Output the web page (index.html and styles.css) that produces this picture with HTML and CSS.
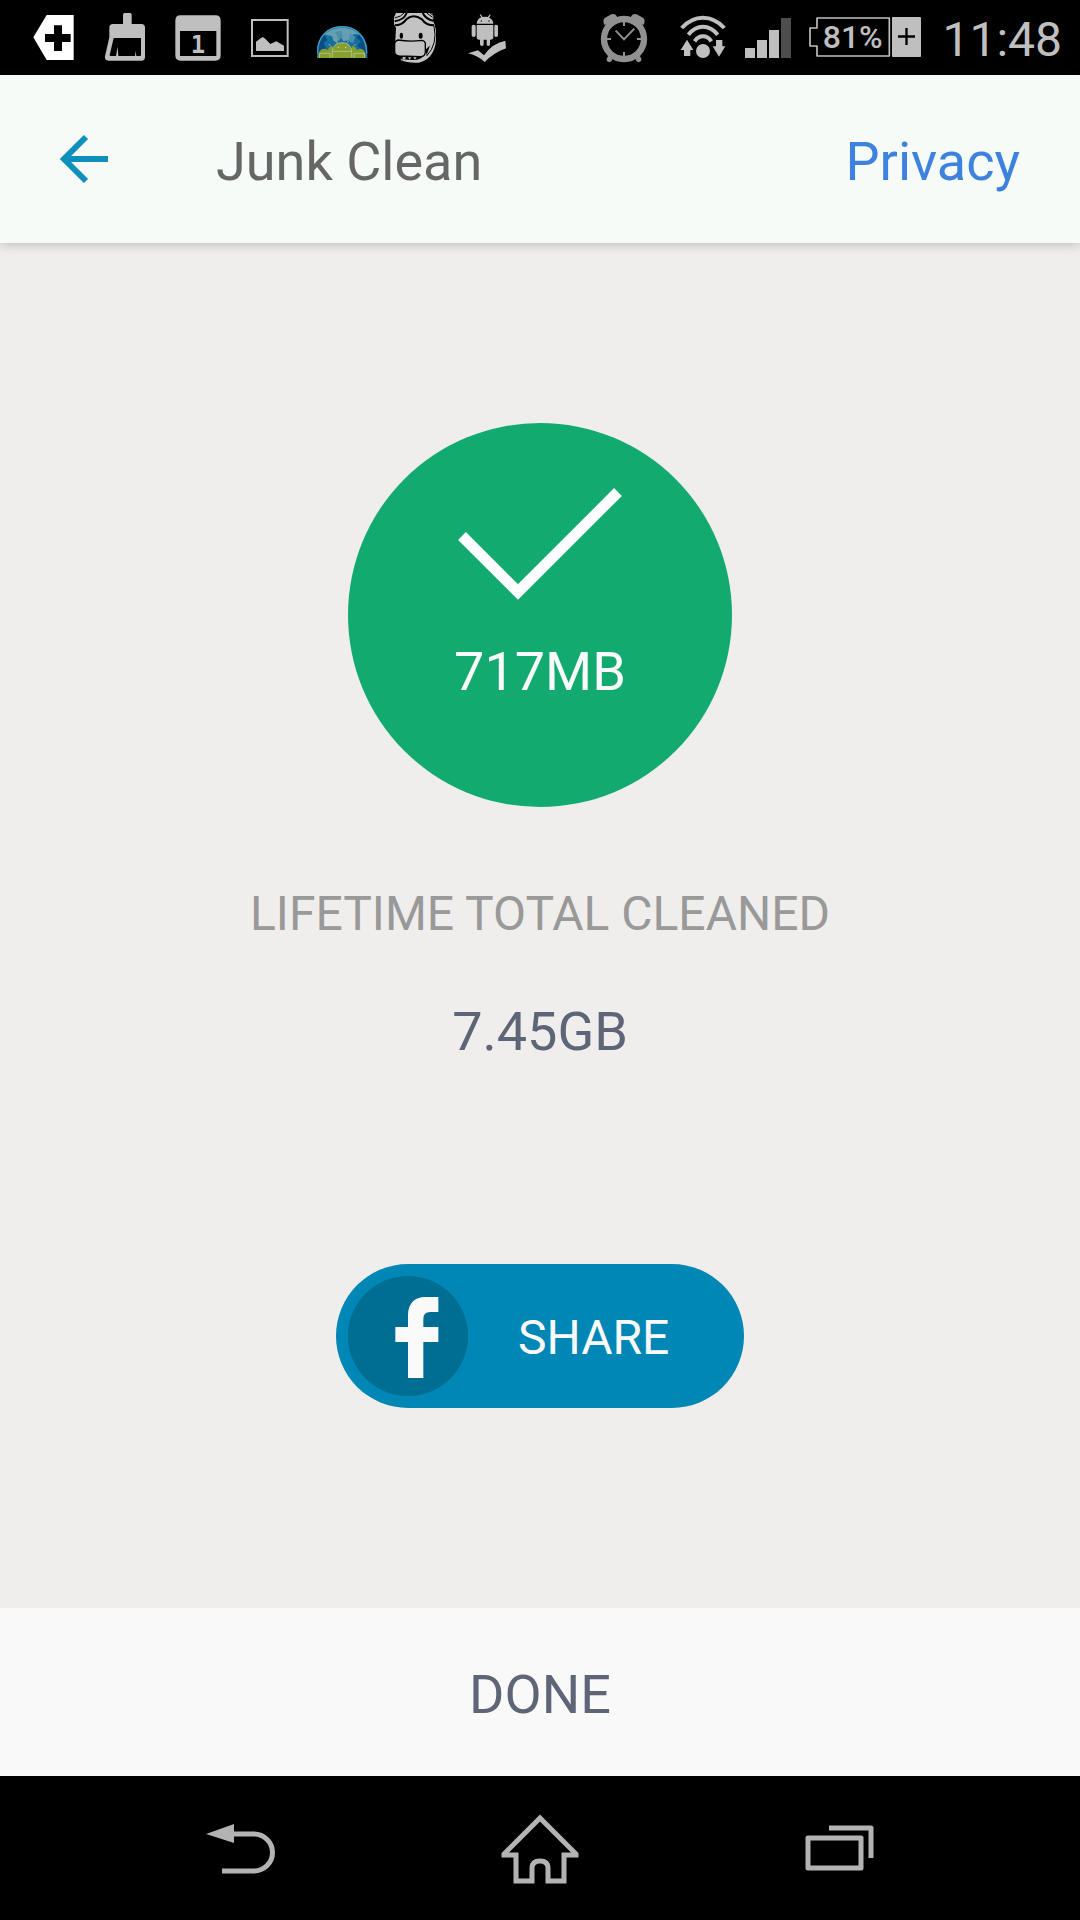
FILE: index.html
```html
<!DOCTYPE html>
<html lang="en">
<head>
<meta charset="utf-8">
<meta name="viewport" content="width=device-width, initial-scale=1">
<title>Junk Clean</title>
<link rel="stylesheet" href="styles.css">
</head>
<body>
<div class="status-bar">
  <div class="status-group">
    <svg class="status-icon" viewBox="-9 0 216 225" aria-hidden="true">
      <path fill="#fff" fill-rule="evenodd" d="M40 112L80 45H161V180H80ZM102 76V102H75V126H102V153H126V126H152V102H126V76Z"/>
    </svg>
    <svg class="status-icon" viewBox="207 0 216 225" aria-hidden="true">
      <path fill="#bfbfbf" fill-rule="evenodd" d="M309 44Q309 39 314 39H330Q335 39 335 44V72H364Q375 72 375 83V171Q375 182 364 182H266Q253 182 255 169L268 112V83Q268 72 279 72H309ZM281 114L269 165Q269 168 272 168H288L293 140L295 168H345L347 153L349 168H360Q363 168 363 165V114Z"/>
    </svg>
    <svg class="status-icon" viewBox="423 0 216 225" aria-hidden="true">
      <path fill="#bfbfbf" fill-rule="evenodd" d="M482 46H586Q602 46 602 62V166Q602 182 586 182H482Q466 182 466 166V62Q466 46 482 46ZM480 93V168H589V93Z"/>
      <text class="calendar-day" x="534" y="158">1</text>
    </svg>
    <svg class="status-icon" viewBox="-21 0 216 225" aria-hidden="true">
      <path fill="none" stroke="#bfbfbf" stroke-width="6" d="M36 60H143V168H36Z"/>
      <path fill="#bfbfbf" d="M48 153V125L62 115L68 111L74 115L91 132L109 124L132 137V153Z"/>
    </svg>
    <svg class="status-icon" viewBox="195 0 216 225" aria-hidden="true">
      <path fill="#176f9f" d="M231 174V154C231 108 266 78 306 78S382 108 382 154V174Z"/>
      <path fill="#084d86" d="M234 160C233 132 241 114 254 104L262 120L250 130L258 142L246 164ZM378 160C378 132 370 114 358 104L348 112L362 124L352 138L368 152Z"/>
      <path fill="#6fa3b5" opacity=".9" d="M254 104C280 76 332 76 358 104C340 98 332 108 328 120L310 124L304 112L292 126L280 122L276 108Z"/>
      <path fill="#4d8eab" d="M286 96L304 92L308 110L296 120ZM330 100L346 112L338 130L326 122Z"/>
      <path fill="none" stroke="#3f9cc6" stroke-width="4" d="M233 160C231 108 266 80 306 80S380 108 380 160"/>
      <path fill="#85a030" d="M236 174V160Q240 146 254 146L264 150Q266 140 277 138L280 146Q284 128 306 128T334 146L337 138Q348 140 350 150L360 146Q374 148 376 160V174Z"/>
      <path fill="none" stroke="#c8d39a" stroke-width="2" d="M238 174V160H270V174M277 172V154H335V172M342 174V160H374V174M277 154Q280 128 306 128T335 154M292 130L286 122M320 130L326 122M272 138L266 132M341 138L347 132"/>
      <circle cx="295" cy="142" r="2" fill="#e3e9cc"/><circle cx="317" cy="142" r="2" fill="#e3e9cc"/>
    </svg>
    <svg class="status-icon" viewBox="411 0 216 225" aria-hidden="true">
      <path fill="#c3c3c3" d="M468 39H576Q582 46 579 62Q590 84 588 108C590 146 574 180 536 188Q504 190 482 180L484 168L466 160Q460 148 466 120L468 84L462 74V52Z"/>
      <path fill="none" stroke="#000" stroke-width="6" d="M464 76Q486 76 499 58Q520 40 546 58Q558 76 582 76M500 39Q492 60 464 64M548 39Q558 58 580 62"/>
      <path fill="none" stroke="#000" stroke-width="3" d="M492 39Q484 50 464 54M560 39L578 52M570 39L580 46M582 78Q594 132 560 168"/>
      <ellipse cx="484" cy="107" rx="5" ry="9"/><ellipse cx="542" cy="107" rx="6" ry="9"/>
      <path fill="#c3c3c3" stroke="#000" stroke-width="4" d="M474 120Q462 124 464 136V156Q465 166 478 168L544 170Q556 168 556 156V136Q558 124 546 121Q510 126 474 120Z"/>
      <path d="M482 168L548 170Q540 180 516 180L484 178ZM556 150L570 136L560 166Z"/>
      <path fill="#c3c3c3" d="M488 171L498 172L495 178H488ZM504 172H514L509 179ZM520 172H530L525 179Z"/>
    </svg>
    <svg class="status-icon" viewBox="627 0 216 225" aria-hidden="true">
      <path fill="#bfbfbf" d="M710 71Q711 57 724 52L719 44L722 43L728 51Q735 49 743 51L750 43L752 45L747 53Q759 58 760 71ZM710 75H760V112Q760 119 753 119H750V133Q750 138 745 138Q740 138 740 133V119H731V133Q731 138 726 138Q720 138 720 133V119H716Q710 119 710 112ZM695 79Q695 74 701 74Q707 74 707 79V106Q707 111 701 111Q695 111 695 106ZM763 79Q763 74 768 74Q774 74 774 79V106Q774 111 768 111Q763 111 763 106Z"/>
      <circle cx="724" cy="63" r="2"/><circle cx="747" cy="63" r="2"/>
      <path fill="#bfbfbf" d="M684 160L714 151L732 166Q756 130 796 122L798 145Q762 158 734 186Q712 166 684 160Z"/>
    </svg>
  </div>
  <div class="status-group">
    <svg class="status-icon status-icon--alarm" viewBox="12 0 240 225" role="img" aria-label="Alarm set">
      <g fill="none" stroke="#919191">
        <circle cx="132" cy="117" r="60" stroke-width="19"/>
        <path stroke-width="6" d="M132 65V78M132 156V169M80 117H93M171 117H184"/>
        <path stroke-width="6" d="M107 92L132 118L163 86" />
        <path stroke-width="16" stroke-linecap="round" d="M92 171L88 178M172 171L176 178"/>
      </g>
      <path fill="#919191" d="M74 76Q66 62 74 54L94 43Q106 38 112 52ZM190 76Q198 62 190 54L170 43Q158 38 152 52Z"/>
    </svg>
    <svg class="status-icon status-icon--wifi" viewBox="252 0 234 225" role="img" aria-label="Wi-Fi">
      <g fill="none" stroke="#bfbfbf" stroke-width="12">
        <path d="M305 84Q333 53 369 53T433 84"/>
        <path d="M325 104Q344 80 369 80T413 104"/>
        <path d="M344 124Q354 109 369 109T394 124"/>
      </g>
      <g fill="#bfbfbf">
        <ellipse cx="369" cy="153" rx="21" ry="21"/>
        <path d="M321 119L340 150H331V168H312V150H302ZM417 170L436 139H427V120H408V139H398Z"/>
      </g>
    </svg>
    <svg class="status-icon status-icon--signal" viewBox="486 0 174 225" role="img" aria-label="Mobile signal">
      <path fill="#bfbfbf" d="M495 144H525V174H495ZM531 120H561V174H531ZM567 90H597V174H567Z"/>
      <path fill="#4d4d4d" d="M603 54H633V174H603Z"/>
    </svg>
    <svg class="status-icon status-icon--battery" viewBox="30 0 390 225">
      <path fill="none" stroke="#bfbfbf" stroke-width="5" stroke-linejoin="round" d="M81 54H298V168H81V138H60V84H81Z"/>
      <path fill="#bfbfbf" fill-rule="evenodd" d="M306 54Q306 51 309 51H390Q393 51 393 54V168Q393 171 390 171H309Q306 171 306 168ZM346 84V106H324V113H346V135H353V113H375V106H353V84Z"/>
      <text class="battery-level" x="188" y="145">81%</text>
    </svg>
    <time class="clock">11:48</time>
  </div>
</div>

<header class="app-bar">
  <button class="back-button" type="button" aria-label="Back">
    <svg viewBox="0 0 48 50" width="48" height="50" aria-hidden="true">
      <path fill="none" stroke="#0f8fbb" stroke-width="6" d="M26 3L4 25L26 47M4 25H48"/>
    </svg>
  </button>
  <h1 class="title">Junk Clean</h1>
  <a class="privacy-link" href="#privacy">Privacy</a>
</header>

<main class="content">
  <section class="result">
    <svg class="result-check" viewBox="0 0 164 112" aria-hidden="true">
      <path fill="none" stroke="#fff" stroke-width="11" d="M4 48L60 104L160 4"/>
    </svg>
    <p class="result-size">717MB</p>
  </section>
  <h2 class="total-label">LIFETIME TOTAL CLEANED</h2>
  <p class="total-size">7.45GB</p>
  <button class="share-button" type="button">
    <span class="share-logo">
      <svg viewBox="84 78 360 360" width="120" height="120" aria-hidden="true">
        <path fill="#fafafa" d="M355 141V186H330Q310 186 310 207V231H355V276H310V384H264V276H226V231H264V195C264 160 286 141 314 141Z"/>
      </svg>
    </span>
    <span class="share-text">SHARE</span>
  </button>
</main>

<button class="done-button" type="button">DONE</button>

<nav class="system-nav" aria-label="System">
  <button class="nav-button" type="button" aria-label="Back">
    <svg viewBox="0 0 84 84" width="84" height="84" aria-hidden="true">
      <path fill="none" stroke="#b3b3b3" stroke-width="5" d="M34 28H56A18 18 0 0 1 56 65H24"/>
      <path fill="#b3b3b3" d="M8 28L36 18V37Z"/>
    </svg>
  </button>
  <button class="nav-button" type="button" aria-label="Home">
    <svg viewBox="0 0 84 84" width="84" height="84" aria-hidden="true">
      <path fill="none" stroke="#b3b3b3" stroke-width="5" d="M42 12L6 48V49H18V75H34V62Q34 55 42 55T50 62V75H66V49H78V48Z"/>
    </svg>
  </button>
  <button class="nav-button" type="button" aria-label="Recent apps">
    <svg viewBox="0 0 84 84" width="84" height="84" aria-hidden="true">
      <path fill="none" stroke="#b3b3b3" stroke-width="5" stroke-linejoin="round" d="M10 32H63V62H10ZM31 22H73V52"/>
    </svg>
  </button>
</nav>
</body>
</html>
```
FILE: styles.css
```css
* {
  box-sizing: border-box;
}

body {
  display: flex;
  flex-direction: column;
  min-height: 100vh;
  margin: 0;
  background: #efeeec;
  font-family: Roboto, "Noto Sans", sans-serif;
  font-size: 54px;
  line-height: 64px;
}

button {
  padding: 0;
  border: 0;
  background: none;
  font: inherit;
  cursor: pointer;
}

svg {
  display: block;
}

h1,
h2,
p {
  margin: 0;
  font-weight: 400;
}

.status-bar {
  display: flex;
  justify-content: space-between;
  height: 75px;
  padding: 0 18px 0 17px;
  background: #000;
}

.status-group {
  display: flex;
  align-items: center;
}

.status-icon {
  width: 72px;
  height: 75px;
}

.status-icon--alarm {
  width: 80px;
}

.status-icon--wifi {
  width: 78px;
}

.status-icon--signal {
  width: 58px;
}

.status-icon--battery {
  width: 130px;
}

.calendar-day {
  fill: #bfbfbf;
  font: 700 72px "DejaVu Sans Mono", monospace;
  text-anchor: middle;
}

.battery-level {
  fill: #bfbfbf;
  font: 500 96px Roboto, sans-serif;
  text-anchor: middle;
}

.clock {
  padding: 4px 0 0 12px;
  color: #bfbfbf;
  font-size: 48px;
  line-height: 56px;
}

.app-bar {
  display: flex;
  align-items: center;
  height: 168px;
  padding: 0 60px;
  background: #f6fbf7;
  box-shadow: 0 2px 10px rgba(0, 0, 0, 0.2);
}

.title {
  flex: 1;
  padding: 6px 0 0 108px;
  color: #666;
  font-size: 54px;
}

.privacy-link {
  padding-top: 6px;
  color: #3d82de;
  text-decoration: none;
}

.content {
  display: flex;
  flex: 1;
  flex-direction: column;
  align-items: center;
  padding: 180px 24px;
}

.result {
  display: flex;
  flex-direction: column;
  align-items: center;
  gap: 40px;
  width: 384px;
  height: 384px;
  padding-top: 65px;
  border-radius: 50%;
  background: #12aa6e;
}

.result-check {
  width: 164px;
  height: 112px;
}

.result-size {
  color: #fafafa;
}

.total-label {
  margin-top: 79px;
  color: #999;
  font-size: 48px;
  line-height: 56px;
}

.total-size {
  margin-top: 58px;
  color: #5e6576;
}

.share-button {
  display: flex;
  align-items: center;
  width: 408px;
  height: 144px;
  margin-top: 200px;
  padding: 0 12px;
  border-radius: 72px;
  background: #0087b5;
  color: #fafafa;
  font-size: 48px;
}

.share-logo {
  width: 120px;
  height: 120px;
  border-radius: 50%;
  background: #006d92;
}

.share-text {
  padding: 4px 0 0 50px;
}

.done-button {
  height: 168px;
  padding-top: 5px;
  background: #f9f9f9;
  color: #5e6576;
}

.system-nav {
  display: grid;
  grid-template-columns: repeat(3, 1fr);
  height: 144px;
  padding: 0 90px;
  background: #000;
}

.nav-button {
  display: grid;
  place-items: center;
}
```
